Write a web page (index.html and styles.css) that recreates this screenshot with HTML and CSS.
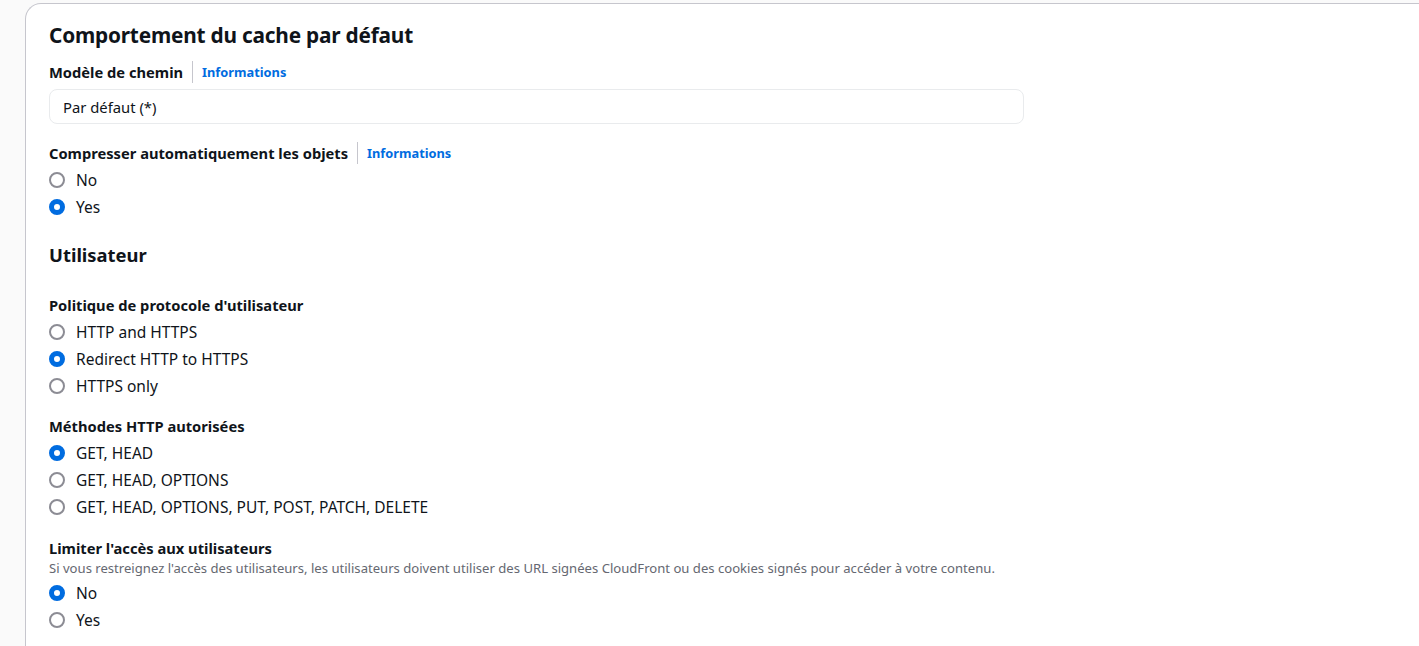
FILE: index.html
```html
<!DOCTYPE html>
<html lang="fr">
<head>
<meta charset="utf-8">
<title>Comportement du cache</title>
<link rel="stylesheet" href="styles.css">
</head>
<body>
<div class="page">
  <section class="card">
    <h2 class="card-title">Comportement du cache par défaut</h2>

    <div class="field first">
      <div class="label-row"><span class="label">Modèle de chemin</span><span class="sep"></span><a class="info">Informations</a></div>
      <div class="input">Par défaut (*)</div>
    </div>

    <div class="field after-input">
      <div class="label-row"><span class="label">Compresser automatiquement les objets</span><span class="sep"></span><a class="info">Informations</a></div>
      <div class="radios">
        <label class="radio"><span class="dot"></span>No</label>
        <label class="radio"><span class="dot on"></span>Yes</label>
      </div>
    </div>

    <h3 class="sub-title">Utilisateur</h3>

    <div class="field">
      <div class="label-row"><span class="label">Politique de protocole d'utilisateur</span></div>
      <div class="radios">
        <label class="radio"><span class="dot"></span>HTTP and HTTPS</label>
        <label class="radio"><span class="dot on"></span>Redirect HTTP to HTTPS</label>
        <label class="radio"><span class="dot"></span>HTTPS only</label>
      </div>
    </div>

    <div class="field">
      <div class="label-row"><span class="label">Méthodes HTTP autorisées</span></div>
      <div class="radios">
        <label class="radio"><span class="dot on"></span>GET, HEAD</label>
        <label class="radio"><span class="dot"></span>GET, HEAD, OPTIONS</label>
        <label class="radio"><span class="dot"></span>GET, HEAD, OPTIONS, PUT, POST, PATCH, DELETE</label>
      </div>
    </div>

    <div class="field">
      <div class="label-row"><span class="label">Limiter l'accès aux utilisateurs</span></div>
      <p class="desc">Si vous restreignez l'accès des utilisateurs, les utilisateurs doivent utiliser des URL signées CloudFront ou des cookies signés pour accéder à votre contenu.</p>
      <div class="radios with-desc">
        <label class="radio"><span class="dot on"></span>No</label>
        <label class="radio"><span class="dot"></span>Yes</label>
      </div>
    </div>
  </section>
</div>
</body>
</html>
```

FILE: styles.css
```css
html, body {
  margin: 0;
  padding: 0;
  background: #fafafa;
  height: 100%;
  overflow: hidden;
}
body {
  font-family: "Noto Sans", "Open Sans", Arial, sans-serif;
  color: #0f141a;
  font-size: 15.5px;
}
.page {
  padding: 3px 0 0 25px;
}
.card {
  background: #ffffff;
  border: 1px solid #c6c6cd;
  border-right: none;
  border-radius: 16px 0 0 0;
  padding: 18px 0 40px 23px;
  min-height: 700px;
}
.card-title {
  margin: 0;
  font-size: 20.8px;
  font-weight: 700;
  line-height: 26px;
  letter-spacing: -0.2px;
}
.field {
  margin-top: 16px;
}
.field.first {
  margin-top: 13px;
}
.field.after-input {
  margin-top: 18px;
}
.label-row {
  display: flex;
  align-items: center;
  height: 22px;
}
.label {
  font-weight: 700;
  font-size: 14.7px;
  line-height: 22px;
}
.sep {
  width: 1px;
  height: 22px;
  background: #c6c6cd;
  margin: 0 9px;
}
.info {
  color: #006ce0;
  font-weight: 700;
  font-size: 12.8px;
  text-decoration: none;
}
.input {
  margin-top: 6px;
  width: 975px;
  height: 35px;
  box-sizing: border-box;
  border: 1px solid #e9ebed;
  border-radius: 8px;
  padding: 0 13px;
  display: flex;
  align-items: center;
  font-size: 14.8px;
}
.radios {
  display: flex;
  flex-direction: column;
  margin-top: 2.5px;
}
.radios.with-desc {
  margin-top: 4px;
}
.radio {
  display: flex;
  align-items: center;
  gap: 11px;
  height: 27px;
  font-size: 15.5px;
}
.dot {
  width: 16px;
  height: 16px;
  box-sizing: border-box;
  border-radius: 50%;
  border: 2px solid #8c8c94;
  background: #fff;
  flex: none;
}
.dot.on {
  border: 5px solid #006ce0;
}
.sub-title {
  margin: 22px 0 27px;
  font-size: 18.4px;
  font-weight: 700;
  line-height: 24px;
}
.desc {
  margin: 1px 0 0;
  font-size: 13.1px;
  line-height: 16px;
  color: #656871;
}
```
